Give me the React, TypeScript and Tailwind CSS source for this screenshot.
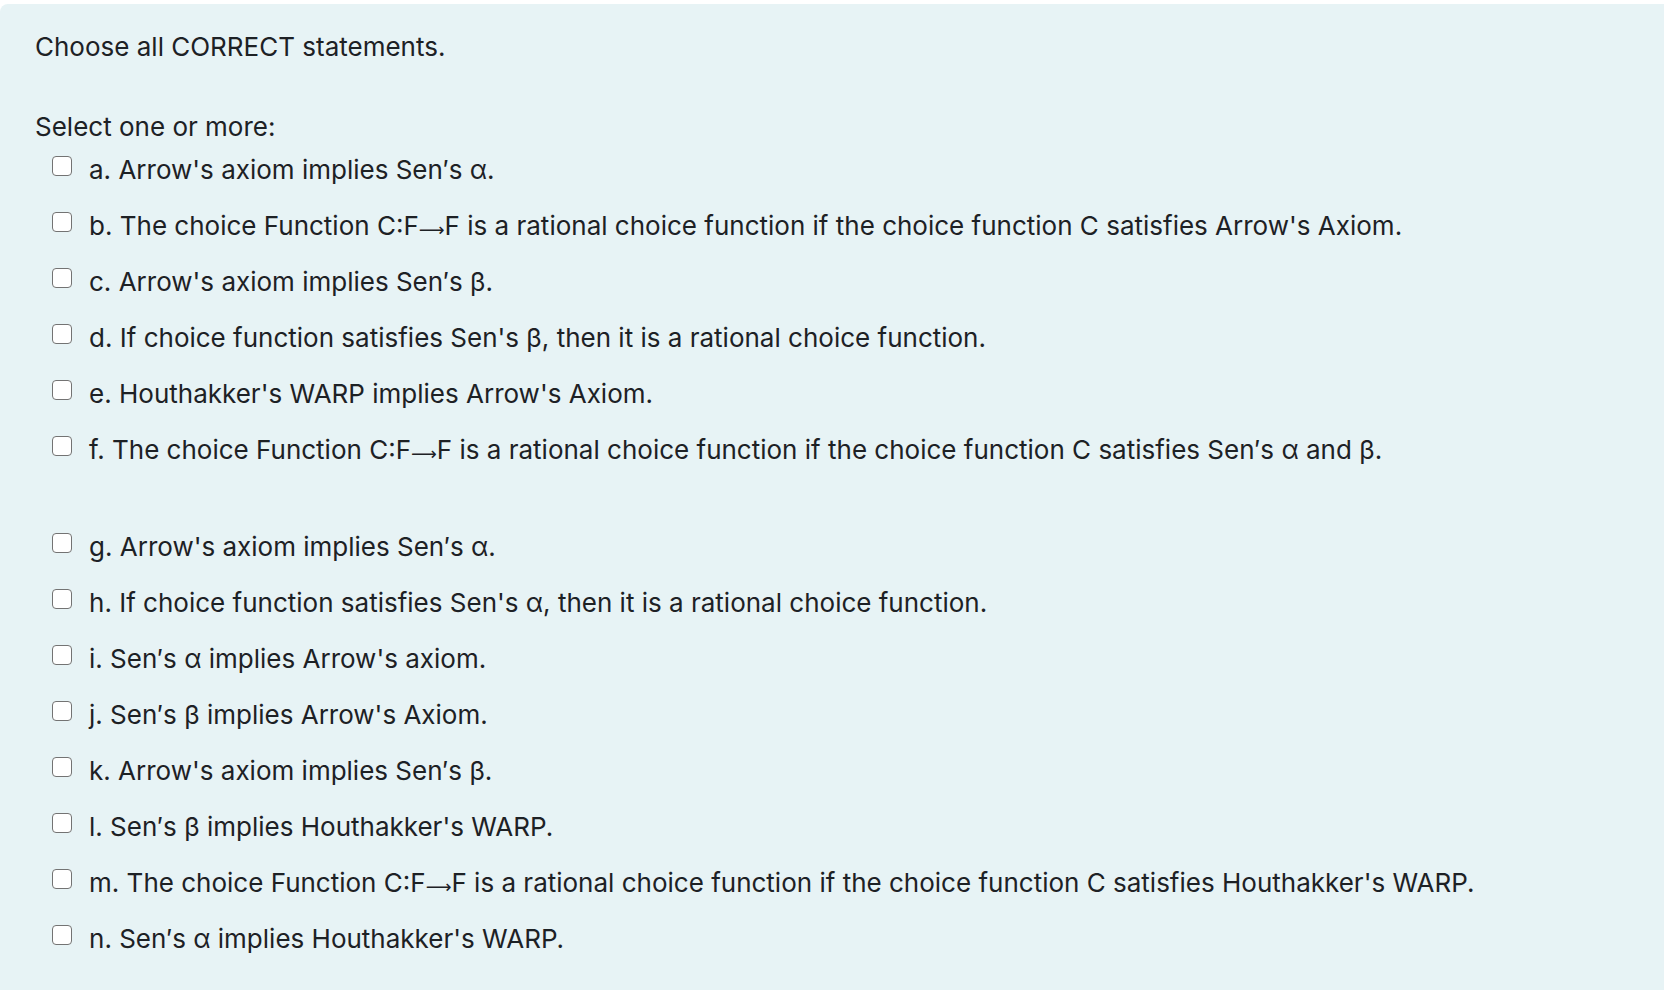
import { FC } from "react";

const Arrow: FC = () => (
  <span className="inline-block align-baseline font-['DejaVu_Sans',sans-serif] text-[18px] leading-none relative top-[1px]">⟶</span>
);

interface Option {
  key: string;
  text: React.ReactNode;
  gapAfter?: boolean;
}

const options: Option[] = [
  { key: "a", text: <>Arrow's axiom implies Sen′s α.</> },
  {
    key: "b",
    text: (
      <>
        The choice Function C:F<Arrow />F is a rational choice function if the choice function C satisfies Arrow's Axiom.
      </>
    ),
  },
  { key: "c", text: <>Arrow's axiom implies Sen′s β.</> },
  { key: "d", text: <>If choice function satisfies Sen's β, then it is a rational choice function.</> },
  { key: "e", text: <>Houthakker's WARP implies Arrow's Axiom.</> },
  {
    key: "f",
    text: (
      <>
        The choice Function C:F<Arrow />F is a rational choice function if the choice function C satisfies Sen′s α and β.
      </>
    ),
    gapAfter: true,
  },
  { key: "g", text: <>Arrow's axiom implies Sen′s α.</> },
  { key: "h", text: <>If choice function satisfies Sen's α, then it is a rational choice function.</> },
  { key: "i", text: <>Sen′s α implies Arrow's axiom.</> },
  { key: "j", text: <>Sen′s β implies Arrow's Axiom.</> },
  { key: "k", text: <>Arrow's axiom implies Sen′s β.</> },
  { key: "l", text: <>Sen′s β implies Houthakker's WARP.</> },
  {
    key: "m",
    text: (
      <>
        The choice Function C:F<Arrow />F is a rational choice function if the choice function C satisfies Houthakker's WARP.
      </>
    ),
  },
  { key: "n", text: <>Sen′s α implies Houthakker's WARP.</> },
];

export default function App() {
  return (
    <div className="min-h-screen bg-white pt-[4px] font-['Inter','Liberation_Sans',sans-serif] text-[#1d2125]">
      <div className="bg-[#e7f3f5] rounded-tl-[8px] min-h-[986px] pl-[35px] pt-[23px] text-[26px]">
        <p className="leading-[39px]">Choose all CORRECT statements.</p>
        <p className="mt-[46px] leading-[30px]">Select one or more:</p>
        <div className="-mt-[1px]">
          {options.map((opt) => (
            <div key={opt.key} className={opt.gapAfter ? "mb-[41px]" : ""}>
              <label className="flex items-center h-[56px] pl-[17px] cursor-pointer">
                <input
                  type="checkbox"
                  className="appearance-none shrink-0 w-[20px] h-[20px] mb-[6px] bg-white border-[1.5px] border-[#737373] rounded-[4px]"
                />
                <span className="ml-[17px] leading-[39px] whitespace-nowrap">
                  {opt.key}. {opt.text}
                </span>
              </label>
            </div>
          ))}
        </div>
      </div>
    </div>
  );
}
